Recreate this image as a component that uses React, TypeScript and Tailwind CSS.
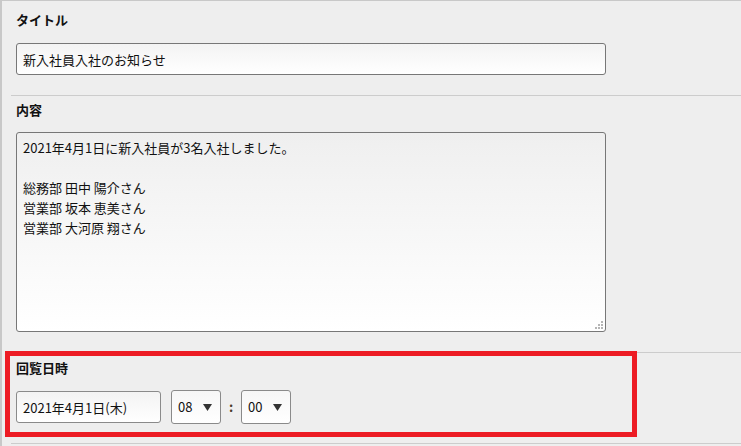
import React from "react"

const font = { fontFamily: '"Noto Sans CJK JP", "Liberation Sans", sans-serif' }

function Label({ children }: { children: React.ReactNode }) {
	return <div className="h-5 text-[13px] leading-5 font-bold text-[#111]">{children}</div>
}

function Caret() {
	return (
		<svg viewBox="0 0 9 7" className="absolute right-[9px] top-[14px] w-[9px] h-[7px] pointer-events-none">
			<path d="M0 0h9L4.5 7z" fill="#333" />
		</svg>
	)
}

function TimeSelect({ value }: { value: string }) {
	return (
		<div className="relative w-[50px] h-[34px]">
			<select
				defaultValue={value}
				className="appearance-none w-full h-full rounded-[3px] border border-[#8a8a8a] bg-white bg-linear-to-b from-[#f6f6f6] to-white pl-[6px] text-[13px] text-[#111] outline-none"
				style={font}
			>
				<option>{value}</option>
			</select>
			<Caret />
		</div>
	)
}

export default function App() {
	const body = "2021年4月1日に新入社員が3名入社しました。\n\n総務部 田中 陽介さん\n営業部 坂本 恵美さん\n営業部 大河原 翔さん"

	return (
		<div className="relative w-[741px] h-[446px] overflow-hidden bg-[#eeeeee] border-t border-l-2 border-[#c8c8c8]" style={font}>
			{/* タイトル */}
			<section className="ml-[9px] pl-[5px] pt-[9px] pb-[20px]">
				<Label>タイトル</Label>
				<input
					defaultValue="新入社員入社のお知らせ"
					className="mt-[13px] block w-[590px] h-[32px] rounded-[3px] border border-[#777] bg-linear-to-b from-[#f3f3f3] to-white px-[6px] text-[13px] text-[#111] outline-none"
					style={font}
				/>
			</section>

			{/* 内容 */}
			<section className="ml-[9px] pl-[5px] pt-[4px] pb-[20px] border-t border-[#cccccc]">
				<Label>内容</Label>
				<div className="relative mt-[12px] w-[590px] h-[200px]">
					<textarea
						defaultValue={body}
						className="block w-full h-full resize-none rounded-[3px] border border-[#777] bg-linear-to-b from-[#efefef] to-white px-[6px] pt-[5px] text-[13px] leading-5 text-[#111] outline-none"
						style={font}
					/>
					<svg viewBox="0 0 8 8" className="absolute right-[3px] bottom-[3px] w-[8px] h-[8px]">
						<g fill="#b5b5b5">
							<rect x="6" y="0" width="2" height="2" />
							<rect x="3" y="3" width="2" height="2" />
							<rect x="6" y="3" width="2" height="2" />
							<rect x="0" y="6" width="2" height="2" />
							<rect x="3" y="6" width="2" height="2" />
							<rect x="6" y="6" width="2" height="2" />
						</g>
					</svg>
				</div>
			</section>

			{/* 回覧日時 */}
			<section className="ml-[9px] pl-[5px] pt-[5px] pb-[19px] border-t border-b border-[#cccccc]">
				<Label>回覧日時</Label>
				<div className="mt-[12px] flex items-center">
					<input
						defaultValue="2021年4月1日(木)"
						className="block w-[145px] h-[32px] rounded-[3px] border border-[#8a8a8a] bg-linear-to-b from-[#f3f3f3] to-white px-[6px] text-[13px] text-[#111] outline-none"
						style={font}
					/>
					<div className="ml-[10px]">
						<TimeSelect value="08" />
					</div>
					<span className="w-[20px] text-center text-[13px] font-bold text-[#4a3a2a]">:</span>
					<TimeSelect value="00" />
				</div>
			</section>

			{/* annotation */}
			<div className="absolute left-[3px] top-[350px] w-[632px] h-[86px] border-[5px] border-[#ed1c24] pointer-events-none" />
		</div>
	)
}
